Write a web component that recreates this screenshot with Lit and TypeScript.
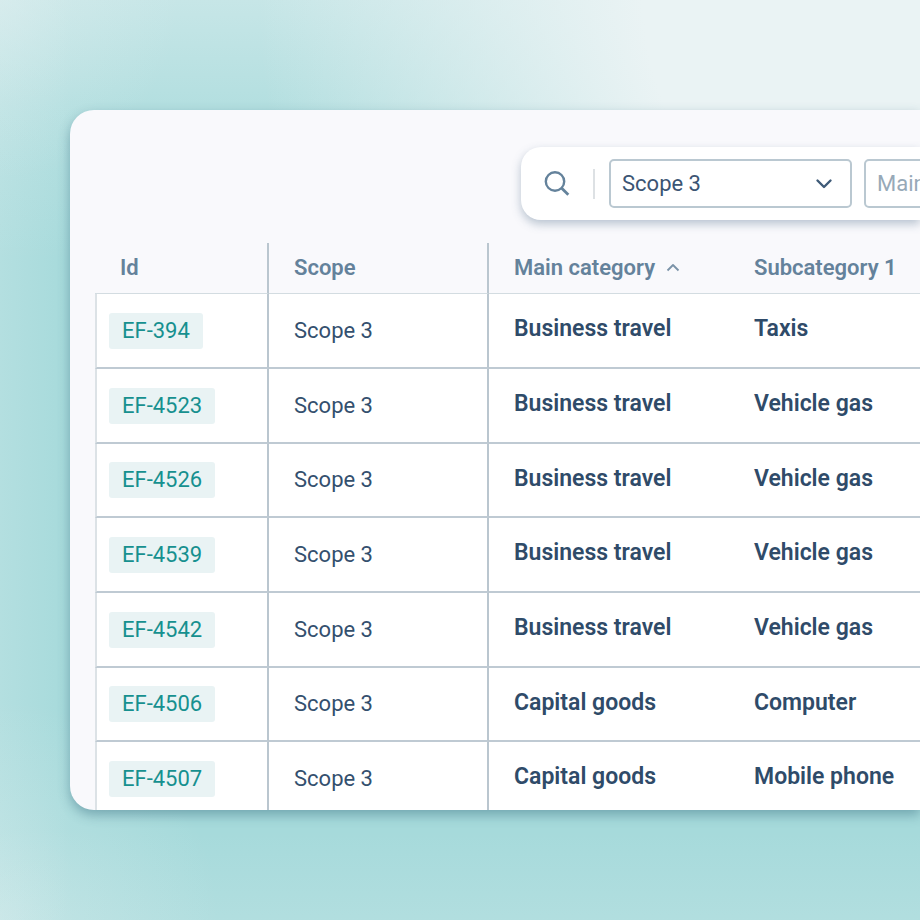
import { LitElement, html, css } from "lit";
import { customElement, state } from "lit/decorators.js";

interface Factor {
  id: string;
  scope: string;
  main: string;
  sub: string;
}

const FACTORS: Factor[] = [
  { id: "EF-394", scope: "Scope 3", main: "Business travel", sub: "Taxis" },
  { id: "EF-4523", scope: "Scope 3", main: "Business travel", sub: "Vehicle gas" },
  { id: "EF-4526", scope: "Scope 3", main: "Business travel", sub: "Vehicle gas" },
  { id: "EF-4539", scope: "Scope 3", main: "Business travel", sub: "Vehicle gas" },
  { id: "EF-4542", scope: "Scope 3", main: "Business travel", sub: "Vehicle gas" },
  { id: "EF-4506", scope: "Scope 3", main: "Capital goods", sub: "Computer" },
  { id: "EF-4507", scope: "Scope 3", main: "Capital goods", sub: "Mobile phone" },
];

@customElement("filter-bar")
export class FilterBar extends LitElement {
  static styles = css`
    :host {
      display: flex;
      align-items: center;
      box-sizing: border-box;
      height: 73px;
      padding: 0 12px 0 20px;
      border-radius: 20px 0 0 20px;
      background: #fff;
      box-shadow: 0 4px 10px rgba(70, 100, 130, 0.36);
      font-family: Roboto, "Liberation Sans", sans-serif;
    }
    .search {
      display: flex;
      flex: none;
      padding: 0;
      border: 0;
      background: none;
      color: #64829b;
      cursor: pointer;
    }
    .divider {
      flex: none;
      width: 2px;
      height: 30px;
      margin: 0 14px 0 20px;
      background: #dde1e4;
    }
    .field {
      position: relative;
      flex: none;
      width: 243px;
      margin-right: 12px;
    }
    .select {
      display: block;
      appearance: none;
      box-sizing: border-box;
      width: 100%;
      height: 49px;
      padding: 0 48px 0 11px;
      border: 2px solid #bac8d1;
      border-radius: 5px;
      background: #fff;
      color: #3c5573;
      font: 400 22px Roboto, "Liberation Sans", sans-serif;
    }
    .empty {
      color: #97a9b8;
    }
    .chevron {
      position: absolute;
      right: 19px;
      top: 17px;
      pointer-events: none;
    }
  `;

  private chevron() {
    return html`<svg class="chevron" width="18" height="16" viewBox="0 0 18 16" fill="none" aria-hidden="true">
      <path d="M2.500 4.500 9 11l6.500-6.500" stroke="#3f5b78" stroke-width="2.400" stroke-linecap="round" stroke-linejoin="round" />
    </svg>`;
  }

  render() {
    return html`
      <button class="search" aria-label="Search">
        <svg width="32" height="32" viewBox="0 0 32 32" fill="none" stroke="currentColor" aria-hidden="true">
          <circle cx="14" cy="13.500" r="9.200" stroke-width="2.400" />
          <path d="M20.500 20 27.300 26.800" stroke-width="2.800" />
        </svg>
      </button>
      <span class="divider"></span>
      <div class="field">
        <select class="select" aria-label="Scope">
          <option>Scope 3</option>
        </select>
        ${this.chevron()}
      </div>
      <div class="field">
        <select class="select empty" aria-label="Main category">
          <option>Main category</option>
        </select>
        ${this.chevron()}
      </div>
    `;
  }
}

@customElement("factor-table")
export class FactorTable extends LitElement {
  @state() private factors = FACTORS;

  static styles = css`
    :host {
      display: block;
      font: 22px/26px Roboto, "Liberation Sans", sans-serif;
      color: #34506e;
    }
    .table {
      width: 100%;
      min-width: 825px;
      table-layout: fixed;
      border-collapse: separate;
      border-spacing: 0;
    }
    .c-id {
      width: 174px;
    }
    .c-scope {
      width: 220px;
    }
    .c-main {
      width: 240px;
    }
    th,
    td {
      box-sizing: border-box;
      padding: 0 0 0 25px;
      text-align: left;
      white-space: nowrap;
    }
    th {
      height: 51px;
      border-bottom: 1px solid #d3dce1;
      color: #64829b;
      font-weight: 600;
    }
    td {
      height: 75px;
      border-bottom: 2px solid #bfcad3;
      background: #fff;
    }
    tr:nth-child(3n) td {
      height: 74px;
    }
    .ruled {
      border-right: 2px solid #bac6cf;
    }
    td.id {
      padding-left: 12px;
      border-left: 2px solid #dce2e6;
    }
    td.strong {
      padding-bottom: 3px;
      font-size: 23px;
      font-weight: 600;
      color: #2f4b69;
    }
    .tag {
      display: inline-block;
      padding: 5px 13px;
      border-radius: 3px;
      background: #e9f3f4;
      color: #16908f;
      text-decoration: none;
    }
    .sort {
      display: inline-flex;
      align-items: center;
      gap: 11px;
      padding: 0;
      border: 0;
      background: none;
      color: inherit;
      font: inherit;
      cursor: pointer;
    }
  `;

  render() {
    return html`
      <table class="table">
        <colgroup>
          <col class="c-id" />
          <col class="c-scope" />
          <col class="c-main" />
          <col />
        </colgroup>
        <thead>
          <tr>
            <th class="ruled" scope="col">Id</th>
            <th class="ruled" scope="col">Scope</th>
            <th scope="col" aria-sort="ascending">
              <button class="sort">
                Main category
                <svg width="14" height="10" viewBox="0 0 14 10" fill="none" aria-hidden="true">
                  <path d="M1.500 7.500 7 2l5.500 5.500" stroke="#7b93a8" stroke-width="1.800" stroke-linejoin="round" />
                </svg>
              </button>
            </th>
            <th scope="col">Subcategory 1</th>
          </tr>
        </thead>
        <tbody>
          ${this.factors.map(
            (f) => html`<tr>
              <td class="id ruled"><a class="tag" href="#${f.id}">${f.id}</a></td>
              <td class="ruled">${f.scope}</td>
              <td class="strong">${f.main}</td>
              <td class="strong">${f.sub}</td>
            </tr>`
          )}
        </tbody>
      </table>
    `;
  }
}

@customElement("app-root")
export class AppRoot extends LitElement {
  static styles = css`
    :host {
      display: flex;
      box-sizing: border-box;
      height: 100vh;
      padding: 110px 0 110px 70px;
      overflow: hidden;
      background:
        radial-gradient(circle at 0 0, rgba(235, 243, 243, 0.3), rgba(235, 243, 243, 0) 180px),
        radial-gradient(circle at 0 100%, rgba(235, 243, 243, 0.3), rgba(235, 243, 243, 0) 220px),
        radial-gradient(circle at 100% 0, #eaf3f4 30vw, rgba(234, 243, 244, 0) 72vw),
        linear-gradient(rgba(234, 243, 244, 0.48), rgba(234, 243, 244, 0.2) 105px, rgba(234, 243, 244, 0) 260px),
        linear-gradient(0deg, rgba(234, 243, 244, 0.17), rgba(234, 243, 244, 0) 90px),
        linear-gradient(90deg, rgba(234, 243, 244, 0.2), rgba(234, 243, 244, 0) 70px),
        #a6dadb;
    }
    .card {
      flex: 1;
      min-width: 0;
      box-sizing: border-box;
      padding: 37px 0 0 25px;
      overflow: hidden;
      border-radius: 24px 0 0 24px;
      background: #f9f9fc;
      box-shadow: 0 5px 12px rgba(50, 105, 125, 0.45);
    }
    .filters {
      margin: 0 0 23px 426px;
    }
  `;

  render() {
    return html`
      <main class="card">
        <filter-bar class="filters"></filter-bar>
        <factor-table></factor-table>
      </main>
    `;
  }
}
